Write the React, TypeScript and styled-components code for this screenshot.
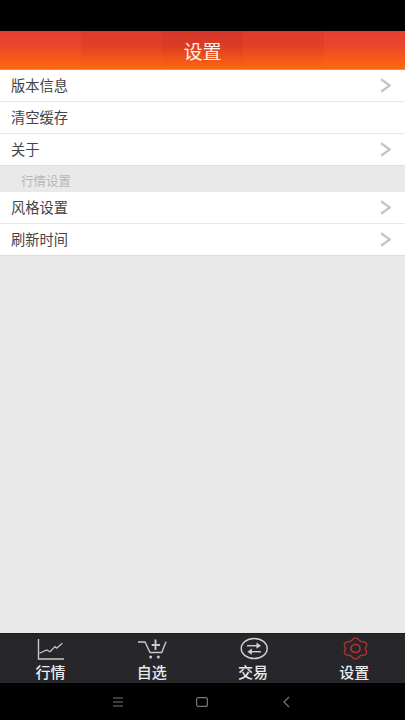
import React from 'react';

import styled, {createGlobalStyle} from 'styled-components';

const GlobalStyle = createGlobalStyle`
    html,
    body {
        margin: 0;
        padding: 0;
        height: 100%;
        background: #000;
    }

    #root {
        height: 100%;
    }
`;

const FONT = `"Noto Sans CJK SC", "Liberation Sans", sans-serif`;

const BAND_SHADES = ['rgba(120,0,0,0)', 'rgba(120,0,0,0.08)', 'rgba(120,0,0,0.14)', 'rgba(120,0,0,0.08)', 'rgba(120,0,0,0)'];

// six soft lobes, slightly wider than tall
function buildGearPath() {
    const points: string[] = [];
    for (let i = 0; i < 96; i++) {
        const angle = (i / 96) * Math.PI * 2;
        const radius = 1 + 0.11 * Math.cos(6 * angle);
        const x = 14.5 + 11.2 * radius * Math.sin(angle);
        const y = 12.5 - 9.4 * radius * Math.cos(angle);
        points.push(`${x.toFixed(2)} ${y.toFixed(2)}`);
    }
    return `M${points.join(' L')} Z`;
}

function Chevron() {
    return (
        <StyledChevron viewBox="0 0 12 16">
            <path d="M1.2 1.2 L10.6 8 L1.2 14.8" fill="none" stroke="#c6c6c6" strokeWidth="2.5" />
        </StyledChevron>
    );
}

function MarketIcon() {
    return (
        <svg width="28" height="24" viewBox="0 0 28 24" fill="none" stroke="#c9c9c9" strokeWidth="1.4">
            <path d="M1.5 3 V23 H27" />
            <path d="M2.5 17.3 L9.7 14 L13 15.7 L18 10.7 L19.7 12.3 L25.3 7.3" strokeWidth="1.2" />
        </svg>
    );
}

function CartIcon() {
    return (
        <svg width="30" height="24" viewBox="0 0 30 24" fill="none" stroke="#c9c9c9" strokeWidth="1.4">
            <path d="M1 6 H8 L13 16.5 H24.7 L29 5.7" />
            <path d="M14.7 9 H23 M18.5 3.5 V14" strokeWidth="1.9" />
            <circle cx="13.7" cy="21" r="1.5" fill="#c9c9c9" stroke="none" />
            <circle cx="21.3" cy="21" r="1.5" fill="#c9c9c9" stroke="none" />
        </svg>
    );
}

function TradeIcon() {
    return (
        <svg width="28" height="24" viewBox="0 0 28 24" fill="none" stroke="#d2d2d2" strokeWidth="1.4" overflow="visible">
            <ellipse cx="15.2" cy="12.5" rx="13" ry="10" />
            <path d="M8 9.7 H20" strokeWidth="1.4" />
            <path d="M22 15.7 H10" strokeWidth="1.4" />
            <polygon points="22,9.7 17.5,6.6 17.5,12.8" fill="#d2d2d2" stroke="none" />
            <polygon points="8.4,15.7 12.9,12.6 12.9,18.8" fill="#d2d2d2" stroke="none" />
        </svg>
    );
}

function SettingsIcon() {
    return (
        <svg width="26" height="24" viewBox="0 0 26 24" fill="none" stroke="#b5312f" strokeWidth="1.4" overflow="visible">
            <path d={buildGearPath()} />
            <ellipse cx="14.5" cy="12.5" rx="4.5" ry="4" strokeWidth="1.7" />
        </svg>
    );
}

const TABS = [
    {label: '行情', icon: <MarketIcon />},
    {label: '自选', icon: <CartIcon />},
    {label: '交易', icon: <TradeIcon />},
    {label: '设置', icon: <SettingsIcon />},
];

export default function App() {
    return (
        <StyledPage>
            <GlobalStyle />
            <StyledStatusBar />
            <StyledHeader>
                <StyledBands>
                    {BAND_SHADES.map((shade, index) => (
                        <StyledBand key={index} $shade={shade} />
                    ))}
                </StyledBands>
                <StyledTitle>设置</StyledTitle>
            </StyledHeader>
            <StyledContent>
                <StyledRow><StyledRowLabel>版本信息</StyledRowLabel><Chevron /></StyledRow>
                <StyledRow><StyledRowLabel>清空缓存</StyledRowLabel></StyledRow>
                <StyledRow $last><StyledRowLabel>关于</StyledRowLabel><Chevron /></StyledRow>
                <StyledSection>行情设置</StyledSection>
                <StyledRow><StyledRowLabel>风格设置</StyledRowLabel><Chevron /></StyledRow>
                <StyledRow $last><StyledRowLabel>刷新时间</StyledRowLabel><Chevron /></StyledRow>
            </StyledContent>
            <StyledTabBar>
                {TABS.map((tab) => (
                    <StyledTab key={tab.label}>
                        <StyledTabIcon>{tab.icon}</StyledTabIcon>
                        <StyledTabLabel>{tab.label}</StyledTabLabel>
                    </StyledTab>
                ))}
            </StyledTabBar>
            <StyledNavBar>
                <svg width="12" height="10" viewBox="0 0 12 10" stroke="#777" strokeWidth="1.2">
                    <path d="M1 1 H11 M1 5 H11 M1 9 H11" />
                </svg>
                <svg width="12" height="10" viewBox="0 0 12 10" fill="none" stroke="#777" strokeWidth="1.2">
                    <rect x="0.6" y="0.6" width="10.8" height="8.8" rx="2" />
                </svg>
                <svg width="12" height="12" viewBox="0 0 12 12" fill="none" stroke="#777" strokeWidth="1.2">
                    <path d="M9 1 L4 6 L9 11" />
                </svg>
            </StyledNavBar>
        </StyledPage>
    );
}

const StyledPage = styled.div`
    display: flex;
    flex-direction: column;
    width: 405px;
    height: 720px;
    overflow: hidden;
    font-family: ${FONT};
`;

const StyledStatusBar = styled.div`
    height: 31px;
    background: #000;
`;

const StyledHeader = styled.header`
    position: relative;
    height: 39px;
    background: linear-gradient(180deg, #e63f32 0%, #e9452c 35%, #f7591a 70%, #fd690e 100%);
    box-shadow: inset 0 -1px 0 #fb8a3a;
`;

const StyledBands = styled.div`
    position: absolute;
    inset: 0 0 1px;
    display: grid;
    grid-template-columns: repeat(5, 1fr);
`;

const StyledBand = styled.div<{$shade: string}>`
    background: linear-gradient(180deg, ${(p) => p.$shade} 40%, rgba(120, 0, 0, 0) 100%);
`;

const StyledTitle = styled.h1`
    position: relative;
    margin: 0;
    line-height: 39px;
    text-align: center;
    font-size: 19px;
    font-weight: 400;
    color: #fff3ea;
`;

const StyledContent = styled.main`
    flex: 1;
    background: #e9e9e9;
`;

const StyledRow = styled.div<{$last?: boolean}>`
    display: flex;
    align-items: center;
    justify-content: space-between;
    box-sizing: border-box;
    height: 32px;
    padding: 0 14px 1px 11px;
    background: #fff;
    border-bottom: 1px solid ${(p) => (p.$last ? '#dedede' : '#e8e8e8')};
`;

const StyledRowLabel = styled.span`
    margin-bottom: 2px;
    font-size: 14.25px;
    color: #444;
`;

const StyledChevron = styled.svg`
    width: 11px;
    height: 15px;
`;

const StyledSection = styled.div`
    box-sizing: border-box;
    height: 26px;
    padding: 0 21px;
    line-height: 30px;
    font-size: 12.5px;
    color: #b8b8b8;
`;

const StyledTabBar = styled.nav`
    display: grid;
    grid-template-columns: repeat(4, 1fr);
    box-sizing: border-box;
    height: 50px;
    background: #26262b;
    border-top: 1px solid #1b1b20;
`;

const StyledTab = styled.div`
    display: flex;
    flex-direction: column;
    align-items: center;
`;

const StyledTabIcon = styled.div`
    display: flex;
    align-items: center;
    justify-content: center;
    height: 28px;
`;

const StyledTabLabel = styled.span`
    margin-top: 1px;
    font-size: 15px;
    font-weight: 500;
    line-height: 18px;
    color: #ececec;
`;

const StyledNavBar = styled.div`
    display: flex;
    align-items: center;
    justify-content: center;
    gap: 72px;
    box-sizing: border-box;
    height: 37px;
    padding-right: 2px;
    background: #000;
`;
